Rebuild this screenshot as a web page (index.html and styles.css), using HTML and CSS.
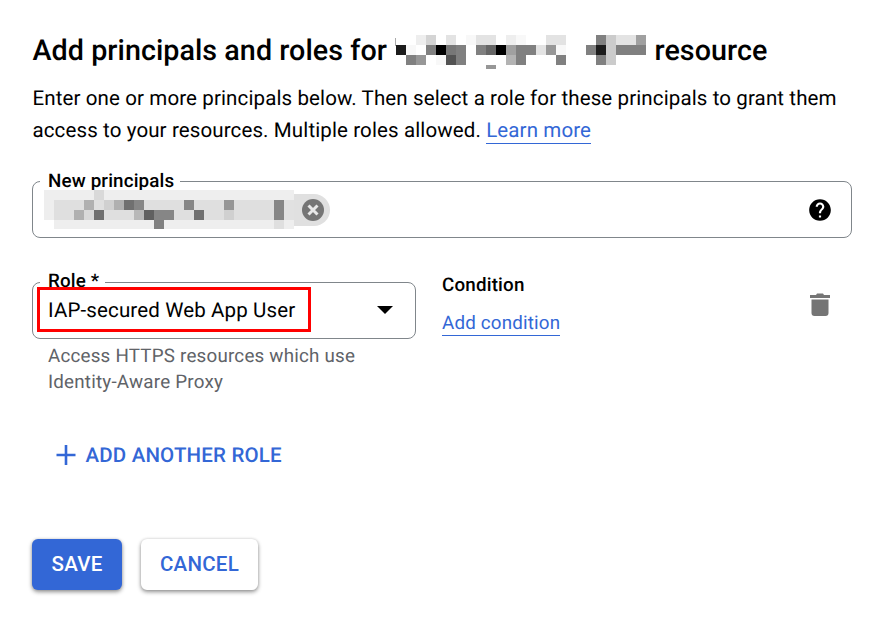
FILE: index.html
```
<!DOCTYPE html>
<html lang="en">
<head>
<meta charset="utf-8">
<title>Add principals and roles</title>
<link rel="stylesheet" href="styles.css">
</head>
<body>
<main class="panel">
  <h1 class="title"><span class="t1">Add principals and roles for</span>
    <svg class="redacted-name" width="251" height="34" viewBox="0 0 251 34" shape-rendering="crispEdges" aria-hidden="true">
      <path fill="#aaa" d="M0 3h1v8H0z"/>
      <path fill="#eee" d="M21 0h10v10H21zM111 0h10v10h-10z"/>
      <path fill="#d4d4d4" d="M31 0h10v10H31z"/>
      <path fill="#e3e3e3" d="M51 0h10v10H51zM81 0h20v10H81zM151 0h20v10h-20zM221 0h20v10h-20zM141 10h10v10h-10z"/>
      <path fill="#f8f8f8" d="M71 0h10v10H71zM121 0h10v10h-10zM11 10h10v10H11zM161 10h10v10h-10zM41 20h10v10H41z"/>
      <path fill="#808080" d="M201 0h10v10h-10zM31 10h10v10H31zM61 10h10v20H61zM81 10h10v10H81zM121 10h20v10h-10v10h-10zM191 10h10v10h-10zM221 10h30v10h-30zM11 20h10v10H11zM201 20h10v10h-10zM161 20h10v10h-10z"/>
      <path fill="#cbcbcb" d="M211 0h10v30h-10z"/>
      <path fill="#a0a0a0" d="M241 0h10v10h-10zM111 10h10v10h-10z"/>
      <path fill="#1c1c1c" d="M1 10h10v10H1zM201 10h10v10h-10z"/>
      <path fill="#000" d="M41 10h10v10H41zM101 10h10v10h-10z"/>
      <path fill="#777" d="M51 10h10v10H51z"/>
      <path fill="#666" d="M91 10h10v10H91z"/>
      <path fill="#979797" d="M151 10h10v10h-10zM21 20h10v10H21zM91 30h10v4H91z"/>
      <path fill="#535353" d="M51 20h10v10H51z"/>
      <path fill="#b3b3b3" d="M111 20h10v10h-10z"/>
    </svg>
    <span class="t2">resource</span></h1>
  <p class="intro"><span class="l1">Enter one or more principals below. Then select a role for these principals to grant them</span><br><span class="l2">access to your resources. Multiple roles allowed.</span> <a class="link learn">Learn more</a></p>

  <section class="field principals">
    <span class="label">New principals</span>
    <div class="chip">
      <svg width="250" height="39" viewBox="0 0 250 39" shape-rendering="crispEdges" aria-hidden="true">
        <path fill="#eee" d="M0 0h250v39H10V30H0z"/>
        <path fill="#dfdfdf" d="M10 10h230v20H10zM230 30h10v9h-10z"/>
        <path fill="#e1e1e1" d="M240 10h10v20h-10z"/>
        <path fill="#d9d9d9" d="M50 0h10v10H50zM40 20h10v10H40z"/>
        <path fill="#d0d0d0" d="M60 10h10v10H60zM180 20h10v10h-10z"/>
        <path fill="#b0b0b0" d="M40 10h10v10H40zM70 10h10v10H70zM30 20h10v10H30z"/>
        <path fill="#b8b8b8" d="M90 20h10v10H90z"/>
        <path fill="#707070" d="M80 10h10v10H80zM50 20h10v10H50zM150 20h10v10h-10z"/>
        <path fill="#868686" d="M90 10h10v10H90zM140 10h10v10h-10zM230 10h10v20h-10zM110 20h20v10h-20z"/>
        <path fill="#808080" d="M110 30h10v9h-10z"/>
        <path fill="#606060" d="M100 20h10v10h-10z"/>
        <path fill="#969696" d="M180 10h10v10h-10z"/>
      </svg>
      <div class="chip-end">
        <svg width="22" height="22" viewBox="0 0 22 22"><circle cx="11" cy="11" r="11" fill="#757575"/><path d="M6.5 6.5l9 9M15.5 6.5l-9 9" stroke="#e8e8e8" stroke-width="3"/></svg>
      </div>
    </div>
    <svg class="help" width="26" height="26" viewBox="0 0 24 24"><path d="M12 2C6.48 2 2 6.48 2 12s4.48 10 10 10 10-4.48 10-10S17.52 2 12 2zm1 17h-2v-2h2v2zm2.07-7.75l-.9.92C13.45 12.9 13 13.5 13 15h-2v-.5c0-1.1.45-2.1 1.17-2.83l1.24-1.26c.37-.36.59-.86.59-1.41 0-1.1-.9-2-2-2s-2 .9-2 2H8c0-2.21 1.79-4 4-4s4 1.79 4 4c0 .88-.36 1.68-.93 2.25z"/></svg>
  </section>

  <section class="binding">
    <div class="role-col">
      <div class="field role">
        <span class="label">Role *</span>
        <span class="value">IAP-secured Web App User</span>
        <svg class="arrow" width="16" height="8" viewBox="0 0 16 8"><path d="M0 0h16L8 8z"/></svg>
        <span class="highlight"></span>
      </div>
      <p class="hint"><span class="h1">Access HTTPS resources which use</span><br><span class="h2">Identity-Aware Proxy</span></p>
    </div>
    <div class="condition">
      <h2 class="condition-title">Condition</h2>
      <a class="link">Add condition</a>
    </div>
    <svg class="trash" width="20" height="24" viewBox="0 0 20 24"><path fill="#757575" d="M0 2h6l1-1.5h6L14 2h6v3H0zM1.5 6.5h17V20a3 3 0 0 1-3 3h-11a3 3 0 0 1-3-3z"/></svg>
  </section>

  <div class="add-role">
    <svg width="20" height="20" viewBox="0 0 20 20"><path d="M10 0v20M.5 10h19" stroke="#3367d6" stroke-width="2.6"/></svg>
    <span>ADD ANOTHER ROLE</span>
  </div>
  <div class="actions">
    <button class="btn save">SAVE</button>
    <button class="btn cancel">CANCEL</button>
  </div>
</main>
</body>
</html>
```
FILE: styles.css
```
* { box-sizing: border-box; }
body { margin: 0; background: #fff; color: #000; font-family: Roboto, "Liberation Sans", sans-serif; text-rendering: geometricPrecision; }
.panel { width: 876px; height: 634px; padding: 33px 24px 0 32px; overflow: hidden; }
.title { display: flex; height: 36px; margin: 0; font-size: 28.7px; line-height: 36px; font-weight: 500; letter-spacing: .05px; white-space: nowrap; }
.redacted-name { margin: 2px 8px 0 8px; flex: none; }
.t1 { width: 355px; padding-left: .5px; }
.t2 { padding-left: .5px; }
.intro { margin: 14px 0 0 .5px; font-size: 20.5px; line-height: 32px; letter-spacing: .12px; white-space: nowrap; }
.link { color: #3367d6; border-bottom: 1px solid #3367d6; padding-bottom: 1px; }
.learn { padding-bottom: 0; }
.field { position: relative; border: 1px solid #80868b; border-radius: 8px; height: 57px; }
.label { position: absolute; left: 7px; top: -12px; padding: 0 6px 0 8px; background: #fff; font-size: 18.8px; line-height: 22px; font-weight: 500; letter-spacing: .16px; white-space: nowrap; }
.principals { width: 820px; margin-top: 34px; display: flex; justify-content: space-between; padding: 8px 18px 0 11px; }
.chip { position: relative; display: flex; height: 39px; }
.chip-end { width: 36px; height: 32px; margin-top: 4px; padding: 4.5px 0 0 8px; background: #e0e0e0; border-radius: 0 16px 16px 0; }
.chip-end svg { display: block; }
.help { margin-top: 6.5px; }
.binding { display: flex; margin-top: 44px; height: 150px; }
.role-col { width: 384px; }
.role { display: flex; align-items: center; justify-content: space-between; padding: 0 22px 0 15px; }
.role .label { top: -13px; }
.value { font-size: 20.5px; letter-spacing: .14px; }
.arrow { margin-top: -2px; }
.highlight { position: absolute; left: 4px; top: 4px; width: 274px; height: 45px; border: 3px solid #f00; }
.hint { margin: 4px 0 0 16px; color: #5f6368; font-size: 18.8px; line-height: 26px; letter-spacing: .21px; white-space: nowrap; }
.condition { margin-left: 26px; width: 367.5px; font-size: 18.8px; letter-spacing: .17px; }
.condition-title { margin: -8px 0 16px; font-size: 18.8px; line-height: 22px; font-weight: 500; letter-spacing: .18px; }
.condition .link { padding-bottom: 1px; }
.trash { margin-top: 11px; }
.add-role { display: flex; align-items: center; height: 30px; margin: 8px 0 0 24px; gap: 9.5px; color: #3367d6; font-size: 20.5px; font-weight: 500; letter-spacing: .17px; white-space: nowrap; }
.add-role span { padding-top: 2px; }
.actions { display: flex; gap: 19px; margin-top: 69px; }
.btn { height: 51px; padding: 0 0 2px; border: 0; border-radius: 6px; font: 500 20.5px Roboto, sans-serif; letter-spacing: .25px; box-shadow: 0 2px 4px rgba(0,0,0,.42), 0 0 3px rgba(0,0,0,.12); }
.save { width: 90px; background: #3367d6; color: #fff; }
.cancel { width: 117px; background: #fff; color: #3367d6; }
```
